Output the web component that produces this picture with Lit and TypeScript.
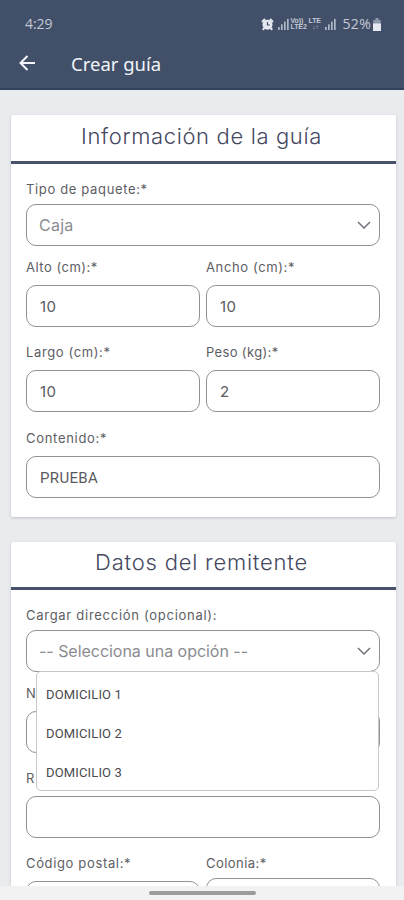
import { LitElement, html, css, svg } from "lit";
import { customElement, property } from "lit/decorators.js";
import { styleMap } from "lit/directives/style-map.js";

const spacing = (v: number) => styleMap({ letterSpacing: `${v}px` });

@customElement("form-field")
class FormField extends LitElement {
  @property() label = "";
  @property() value = "";
  @property() kind = "input";
  @property({ type: Number }) tracking = 0.35;
  @property({ type: Number }) valueTracking = 0;

  static styles = css`
    :host { display: block; }
    .label { height: 16px; font: 400 13px/16px Inter, sans-serif; color: #5d5e64; white-space: nowrap; }
    .control {
      box-sizing: border-box; height: 42px; margin-top: 10px; padding: 2px 8px 0 13px;
      border: 1px solid #929292; border-radius: 10px; background: #fff;
      display: flex; align-items: center; justify-content: space-between;
      font: 400 15px/20px Inter, sans-serif; color: #5a5b5e; white-space: nowrap;
    }
    .select { margin-top: 6.5px; margin-bottom: -3.5px; padding-top: 0; padding-left: 12px; color: #8b8b90; font-size: 16px; }
    .upper { font-family: Roboto, sans-serif; }
    .chevron { width: 14px; height: 8px; display: block; fill: none; stroke: #71747c; stroke-width: 1.5; }
  `;

  render() {
    return html`
      <div class="label"><span style=${spacing(this.tracking)}>${this.label}</span></div>
      <div class="control ${this.kind}">
        <span style=${spacing(this.valueTracking)}>${this.value}</span>
        ${this.kind === "select"
          ? html`<svg class="chevron" viewBox="0 0 14 8"><path d="M1 1l6 6 6-6" /></svg>`
          : null}
      </div>`;
  }
}

@customElement("status-bar")
class StatusBar extends LitElement {
  static styles = css`
    :host { display: flex; justify-content: space-between; height: 40px; padding: 4px 22px 0 25px; align-items: center; box-sizing: border-box; font: 400 14px/16px "Open Sans", sans-serif; color: #c3cad6; }
    .time { letter-spacing: -0.1px; padding-top: 4px; }
    .right { display: flex; align-items: center; padding-top: 4px; }
    .alarm { width: 13px; height: 13px; margin-right: 4px; }
    .bars { width: 13px; height: 12px; }
    .net { display: flex; flex-direction: column; font: 700 7px/6px "Liberation Sans", sans-serif; letter-spacing: -0.1px; width: 18px; }
    .lte { width: 16px; }
    .arrows { font-size: 6px; padding-left: 4px; }
    .pct { margin-left: 5px; letter-spacing: 0.3px; }
    .battery { width: 10px; height: 13px; margin-left: 1px; }
  `;

  bars() {
    return html`<svg class="bars" viewBox="0 0 13 12" fill="#aeb7c6">
      ${[0, 1, 2, 3].map((i) => svg`<rect x=${i * 3} y=${9 - i * 2.7} width="1.7" height=${3 + i * 2.7} />`)}
    </svg>`;
  }

  render() {
    return html`
      <span class="time">4:29</span>
      <div class="right">
        <svg class="alarm" viewBox="0 0 13 13">
          <path d="M1 4L4 1M9 1l3 3M3 10l-1 2M10 10l1 2" stroke="#e6eaf0" stroke-width="2" />
          <circle cx="6.5" cy="6.8" r="5" fill="#e6eaf0" />
          <path d="M6.5 4v3h2.4" fill="none" stroke="#424f68" stroke-width="1.2" />
        </svg>
        ${this.bars()}
        <div class="net"><span>Vo))</span><span>LTE2</span></div>
        <div class="net lte"><span>LTE</span><span class="arrows">↓↑</span></div>
        ${this.bars()}
        <span class="pct">52%</span>
        <svg class="battery" viewBox="0 0 9 13">
          <path d="M3 0h3v2h2.2v4H.8V2H3z" fill="#8f9bad" />
          <path d="M.5 5.5h8V13h-8z" fill="#e6eaf0" />
        </svg>
      </div>`;
  }
}

@customElement("app-root")
class AppRoot extends LitElement {
  static styles = css`
    :host { display: flex; flex-direction: column; height: 900px; overflow: hidden; background: #e9ebee; }
    .top { flex: none; height: 90px; box-sizing: border-box; background: #424f68; border-bottom: 2px solid #30415f; }
    .bar { height: 46px; display: flex; align-items: center; padding-left: 19px; color: #f1f4f8; font: 400 18.5px/24px "Noto Sans", sans-serif; }
    .back { width: 17px; height: 16px; margin-right: 35px; fill: none; stroke: #f1f4f8; stroke-width: 2; }
    .title { padding-top: 1px; }
    .content { flex: 1; min-height: 0; overflow: hidden; padding: 25px 8.5px 0 10.5px; display: flex; flex-direction: column; gap: 25px; }
    .card { flex: none; background: #fff; border-radius: 2px; box-shadow: 0 1px 3px rgba(50, 55, 65, 0.22); }
    .head { height: 48.5px; box-sizing: border-box; padding-right: 3px; border-bottom: 3px solid #485268; text-align: center; font: 300 22px/43px Inter, sans-serif; color: #454860; white-space: nowrap; }
    .sender { height: 47.5px; line-height: 41px; }
    .rows { display: flex; flex-direction: column; gap: 17px; padding: 17.5px 15.5px 19.5px; }
    .pair { display: grid; grid-template-columns: 1fr 1fr; gap: 6px; }
    .last { margin-top: 0.5px; }
    .anchor { position: relative; z-index: 1; }
    .menu {
      position: absolute; left: 9.5px; right: 1px; top: 64px; height: 120px; box-sizing: border-box;
      background: #fff; border: 1px solid #c8c8c8; border-radius: 5px; padding-top: 2.5px;
      font: 400 13px/39.3px Roboto, sans-serif; color: #4a4b4f;
    }
    .option { padding-left: 9.5px; letter-spacing: 0.15px; white-space: nowrap; }
    .nav { flex: none; height: 14px; background: #f2f2f2; display: flex; justify-content: center; }
    .pill { width: 107px; height: 4px; margin-top: 5px; border-radius: 2px; background: #9c9c9c; }
  `;

  render() {
    return html`
      <header class="top">
        <status-bar></status-bar>
        <div class="bar">
          <svg class="back" viewBox="0 0 17 16"><path d="M16 8H2M8.5 1L1.5 8l7 7" /></svg>
          <span class="title">Crear guía</span>
        </div>
      </header>
      <main class="content">
        <section class="card">
          <div class="head"><span style=${spacing(0.64)}>Información de la guía</span></div>
          <div class="rows">
            <form-field label="Tipo de paquete:*" kind="select" value="Caja" tracking="0.65" valueTracking="0.25"></form-field>
            <div class="pair">
              <form-field label="Alto (cm):*" value="10" tracking="0.5" valueTracking="0.4"></form-field>
              <form-field label="Ancho (cm):*" value="10" tracking="0.62" valueTracking="0.4"></form-field>
            </div>
            <div class="pair">
              <form-field label="Largo (cm):*" value="10" tracking="0.62" valueTracking="0.4"></form-field>
              <form-field label="Peso (kg):*" value="2" tracking="0.35"></form-field>
            </div>
            <form-field class="last" label="Contenido:*" kind="upper" value="PRUEBA" tracking="0.7" valueTracking="0.35"></form-field>
          </div>
        </section>
        <section class="card">
          <div class="head sender"><span style=${spacing(0.78)}>Datos del remitente</span></div>
          <div class="rows">
            <div class="anchor">
              <form-field label="Cargar dirección (opcional):" kind="select" value="-- Selecciona una opción --" tracking="0.72" valueTracking="-0.03"></form-field>
              <div class="menu">
                ${[1, 2, 3].map((n) => html`<div class="option">DOMICILIO ${n}</div>`)}
              </div>
            </div>
            <form-field label="N"></form-field>
            <form-field label="R"></form-field>
            <div class="pair">
              <form-field label="Código postal:*" tracking="0.65"></form-field>
              <form-field label="Colonia:*" kind="select" tracking="0.45"></form-field>
            </div>
          </div>
        </section>
      </main>
      <footer class="nav"><div class="pill"></div></footer>`;
  }
}
